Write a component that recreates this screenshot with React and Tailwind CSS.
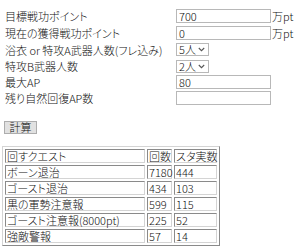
import React from "react";

const F = "font-['Noto_Sans_CJK_JP',sans-serif] [font-feature-settings:'palt'] font-light";

function Input({ value }) {
  return (
    <div className="w-[95px] h-[14px] border border-[#b8b8b8] bg-white pl-[2px] text-[11px] leading-[12px]">
      {value}
    </div>
  );
}

function Select({ value }) {
  return (
    <div className="w-[33px] h-[13px] border border-[#b8b8b8] bg-white pl-[2px] pr-[3px] flex items-center justify-between text-[11px] leading-[11px]">
      <span>{value}</span>
      <svg width="7" height="5" viewBox="0 0 7 5">
        <path d="M0.8 1 L3.5 3.7 L6.2 1" fill="none" stroke="#555" strokeWidth="1.1" />
      </svg>
    </div>
  );
}

function Row({ h, label, children }) {
  return (
    <div className={`flex items-center ${h}`}>
      <div className="w-[171px] whitespace-nowrap">{label}</div>
      {children}
    </div>
  );
}

const rows = [
  ["回すクエスト", "回数", "スタ実数"],
  ["ボーン退治", "7180", "444"],
  ["ゴースト退治", "434", "103"],
  ["黒の軍勢注意報", "599", "115"],
  ["ゴースト注意報(8000pt)", "225", "52"],
  ["強敵警報", "57", "14"],
];

function Cell({ w, children }) {
  return (
    <td className="p-0 border border-t-[#8a8a8a] border-l-[#8a8a8a] border-b-[#d4d4d4] border-r-[#d4d4d4]">
      <div className={`${w} h-[12px] leading-[12px] pl-[1px] whitespace-nowrap overflow-visible`}>{children}</div>
    </td>
  );
}

export default function App() {
  return (
    <div className={`${F} w-[300px] h-[246px] overflow-hidden bg-white text-[#111] text-[11px] leading-[12px]`}>
      <div className="pt-[7px] pl-[5px]">
        <Row h="h-[17px]" label="目標戦功ポイント">
          <Input value="700" />
          <span className="ml-[1px]">万pt</span>
        </Row>
        <Row h="h-[17px]" label="現在の獲得戦功ポイント">
          <Input value="0" />
          <span className="ml-[1px]">万pt</span>
        </Row>
        <Row h="h-[17px]" label="浴衣 or 特攻A武器人数(フレ込み)">
          <Select value="5人" />
        </Row>
        <Row h="h-[16px]" label="特攻B武器人数">
          <Select value="2人" />
        </Row>
        <Row h="h-[16px]" label="最大AP">
          <Input value="80" />
        </Row>
        <Row h="h-[16px]" label="残り自然回復AP数">
          <Input value="" />
        </Row>
      </div>
      <div className="pl-[4px] mt-[15px]">
        <div className="w-[33px] h-[13px] border border-[#adadad] bg-[#e1e1e1] flex items-center justify-center text-[11px] leading-[11px]">
          計算
        </div>
      </div>
      <table className="ml-[2px] mt-[12px] border border-t-[#d4d4d4] border-l-[#d4d4d4] border-b-[#8a8a8a] border-r-[#8a8a8a] border-separate border-spacing-[2px]">
        <tbody>
          {rows.map((r, i) => (
            <tr key={i}>
              <Cell w="w-[138px]">{r[0]}</Cell>
              <Cell w="w-[23px]">{r[1]}</Cell>
              <Cell w="w-[41px]">{r[2]}</Cell>
            </tr>
          ))}
        </tbody>
      </table>
    </div>
  );
}
